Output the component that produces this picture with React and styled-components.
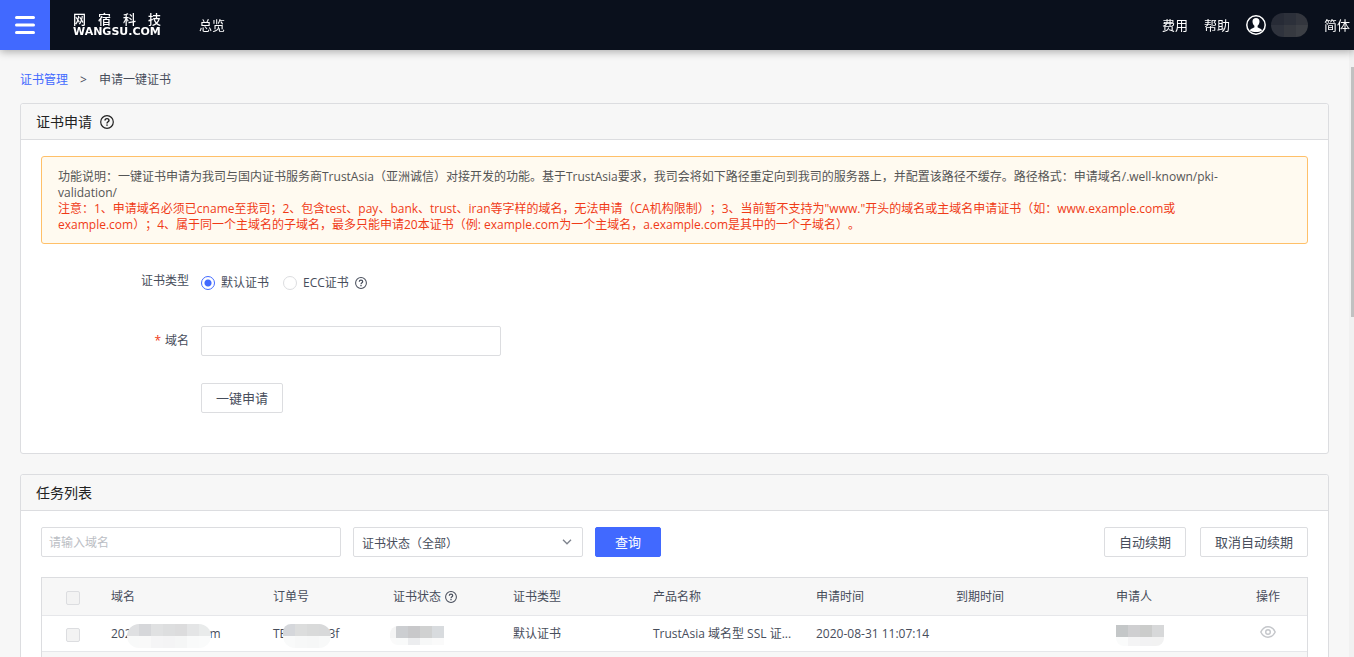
import React from "react";
import styled, { createGlobalStyle, css } from "styled-components";

const Global = createGlobalStyle`
  * { box-sizing: border-box; }
  body {
    margin: 0;
    background: #f7f7f7;
    color: #474d5b;
    font-family: "Open Sans", "Noto Sans CJK SC", sans-serif;
    font-size: 12px;
    line-height: 16px;
    text-spacing-trim: space-all;
  }
  button, input, select { font: inherit; color: inherit; }
  a { text-decoration: none; color: inherit; }
`;

const Shell = styled.div`
  display: flex;
  flex-direction: column;
  height: 100vh;
`;

const TopBar = styled.header`
  position: relative;
  z-index: 2;
  flex: none;
  display: flex;
  align-items: center;
  height: 50px;
  padding-right: 4px;
  background: #0a101c;
  color: #fff;
  font-size: 13px;
  box-shadow: 0 2px 8px rgba(0, 0, 0, 0.3);
`;

const MenuButton = styled.button`
  display: grid;
  place-items: center;
  width: 50px;
  height: 50px;
  padding: 0;
  border: 0;
  background: #4169ff;
  color: #fff;
`;

const Brand = styled.a`
  display: flex;
  flex-direction: column;
  width: 88px;
  margin: 0 38px 0 23px;
`;

const BrandName = styled.span`
  display: flex;
  justify-content: space-between;
  font-size: 13px;
  font-weight: 500;
  line-height: 14px;
`;

const BrandDomain = styled.span`
  font-family: "DejaVu Sans", sans-serif;
  font-weight: 700;
  font-size: 11px;
  line-height: 12px;
`;

const BarSide = styled.nav`
  display: flex;
  align-items: center;
  gap: 16px;
  margin-left: auto;
`;

const Account = styled.a`
  display: flex;
  align-items: center;
  gap: 5px;
`;

const AccountName = styled.span`
  display: flex;
  flex-wrap: wrap;
  width: 37px;
  height: 24px;
  border-radius: 12px;
  overflow: hidden;
`;

const NameBlock = styled.i`
  width: ${(p) => p.$w}px;
  height: 12px;
  background: ${(p) => p.$c};
`;

const Scroller = styled.main`
  flex: 1;
  min-height: 0;
  overflow-y: auto;
  scrollbar-width: none;
  padding: 21px 25px 20px 20px;
`;

const ScrollTrack = styled.div`
  position: fixed;
  z-index: 1;
  top: 50px;
  right: 0;
  bottom: 0;
  width: 5px;
  padding: 17px 0 0 2px;
  background: #f1f1f1;
`;

const ScrollThumb = styled.div`
  height: 250px;
  background: #c1c1c1;
`;

const Crumbs = styled.nav`
  display: flex;
  gap: 12px;
  height: 18px;
  line-height: 18px;
  margin-bottom: 14px;
`;

const CrumbLink = styled.a`
  color: #4169ff;
`;

const Panel = styled.section`
  border: 1px solid #dcdde0;
  border-radius: 3px;
  background: #fff;
  margin-bottom: 20px;
`;

const PanelHead = styled.h2`
  display: flex;
  align-items: center;
  gap: 8px;
  height: 36px;
  margin: 0;
  padding: 0 15px;
  border-bottom: 1px solid #dcdde0;
  background: #f7f7f7;
  border-radius: 3px 3px 0 0;
  color: #222;
  font-size: 14px;
  font-weight: 400;
`;

const PanelBody = styled.div`
  padding: 16px 20px ${(p) => p.$bottom || 20}px;
`;

const Notice = styled.div`
  padding: 12px 56px 10px 16px;
  border: 1px solid #ffc069;
  border-radius: 3px;
  background: #fffaf0;
  color: #555;
`;

const NoticeText = styled.p`
  margin: 0;
  color: ${(p) => (p.$warn ? "#f03a17" : "inherit")};
`;

const Form = styled.form`
  display: flex;
  flex-direction: column;
  gap: 27px;
  padding-top: 24px;
`;

const Field = styled.div`
  display: flex;
  align-items: center;
  min-height: 30px;
`;

const TypeField = styled(Field)`
  align-items: flex-start;
  min-height: 31px;
  padding-top: 5px;
`;

const FieldLabel = styled.label`
  width: 148px;
  margin-right: 12px;
  text-align: right;
`;

const Star = styled.span`
  color: #f03a17;
  margin-right: 4px;
`;

const RadioGroup = styled.div`
  display: flex;
  align-items: center;
  gap: 14px;
  padding-top: 2px;
`;

const RadioLabel = styled.label`
  display: flex;
  align-items: center;
  gap: 6px;
`;

const Radio = styled.input`
  appearance: none;
  width: 14px;
  height: 14px;
  margin: 0;
  border: 1px solid #dcdde0;
  border-radius: 50%;
  background: #fff;
  &:checked {
    border-color: #4169ff;
    background: radial-gradient(circle, #4169ff 3px, #fff 4px);
  }
`;

const box = css`
  height: 30px;
  border: 1px solid #dcdde0;
  border-radius: 2px;
  background: #fff;
`;

const TextBox = styled.input`
  ${box}
  width: 300px;
  padding: 0 7px;
  &::placeholder { color: #bbbec4; opacity: 1; }
`;

const Button = styled.button`
  ${box}
  padding: 0 14px;
  font-size: 13px;
  line-height: 26px;
  ${(p) => p.$primary && css`
    padding: 0 19px;
    border-color: #4169ff;
    background: #4169ff;
    color: #fff;
  `}
`;

const Indent = styled.div`
  padding-left: 160px;
`;

const Toolbar = styled.div`
  display: flex;
  gap: 12px;
  margin-bottom: 20px;
`;

const ToolbarEnd = styled.div`
  display: flex;
  gap: 14px;
  margin-left: auto;
`;

const SelectWrap = styled.div`
  display: grid;
  width: 230px;
  align-items: center;
  & > * { grid-area: 1 / 1; }
  & > svg { justify-self: end; margin-right: 11px; pointer-events: none; }
`;

const Select = styled.select`
  ${box}
  appearance: none;
  width: 100%;
  padding: 4px 8px 0;
`;

const Table = styled.table`
  width: 100%;
  table-layout: fixed;
  border-collapse: separate;
  border-spacing: 0;
  border: 1px solid #dcdde0;
`;

const Row = styled.tr`
  height: ${(p) => (p.$head ? 38 : 36)}px;
  background: ${(p) => (p.$shade ? "#f7f7f7" : "#fff")};
  & > * {
    padding: 0 10px 0 1px;
    border-bottom: 1px solid #e6e7ea;
    font-weight: 400;
    text-align: left;
    white-space: nowrap;
  }
  & > :first-child { padding: 0 0 0 24px; }
`;

const CheckBox = styled.input`
  appearance: none;
  display: block;
  width: 14px;
  height: 14px;
  margin: 2px 0 0;
  border: 1px solid #dcdde0;
  border-radius: 2px;
  background: #f3f3f3;
`;

const WithIcon = styled.span`
  display: flex;
  align-items: center;
  gap: 4px;
`;

const Masked = styled.span`
  display: flex;
  align-items: center;
`;

/* Pixelated patch that lies over a private value. */
const Patch = styled.svg`
  position: relative;
  display: block;
  flex: none;
  margin: 4px ${(p) => -(p.$over?.[1] || 0)}px 0 ${(p) => -(p.$over?.[0] || 0)}px;
  border-radius: ${(p) => p.$radius};
`;

const IconButton = styled.button`
  display: block;
  margin-left: 4px;
  padding: 0;
  border: 0;
  background: none;
  color: #c4c6ca;
`;

const Help = ({ size }) => (
  <svg width={size} height={size} viewBox="0 0 14 14" fill="none" stroke="currentColor" strokeWidth="1.2" aria-hidden="true">
    <circle cx="7" cy="7" r="6.3" />
    <path d="M5 5.6C5 4.3 5.9 3.6 7 3.6s2 .7 2 1.8C9 6.7 7 6.8 7 8.4" strokeWidth="1.4" />
    <path d="M7 9.4v1.4" strokeWidth="1.5" />
  </svg>
);

const UserIcon = () => (
  <svg width="20" height="20" viewBox="0 0 20 20" aria-hidden="true">
    <circle cx="10" cy="10" r="9.2" fill="none" stroke="#fff" strokeWidth="1.5" />
    <path d="M10 3C7.7 3 6.5 4.4 6.5 6.4c0 1.900.8 3.500 1.900 4.400v1.500c-.4.9-4 1.100-4.500 3.200C5.600 16.700 7.700 17 10 17s4.400-.3 6.100-1.500c-.5-2.100-4.100-2.300-4.500-3.200v-1.500c1.100-.9 1.900-2.500 1.900-4.400C13.500 4.400 12.300 3 10 3z" fill="#fff" />
  </svg>
);

const Eye = () => (
  <svg width="16" height="12" viewBox="0 0 16 12" fill="none" stroke="currentColor" strokeWidth="1.4" aria-hidden="true">
    <path d="M.8 6C2.5 2.5 5 .8 8 .8S13.5 2.5 15.2 6C13.5 9.5 11 11.2 8 11.2S2.5 9.500.8 6z" />
    <circle cx="8" cy="6" r="2.3" />
  </svg>
);

const Pixels = ({ top, bottom, width, height = 24, start = 0, radius, over }) => (
  <Patch width={width} height={height} viewBox={`0 0 ${width} ${height}`} $radius={radius} $over={over} aria-hidden="true">
    {top.map((c, i) => <rect key={i} x={start + i * 12} y="0" width="12" height="12" fill={c} />)}
    {bottom.map((c, i) => <rect key={i} x={start + i * 12} y="12" width="12" height="12" fill={c} />)}
  </Patch>
);

const columns = [68, 162, 120, 120, 140, 163, 140, 160, 140, null];

export default function App() {
  return (
    <Shell>
      <Global />
      <TopBar>
        <MenuButton aria-label="菜单">
          <svg width="20" height="18" viewBox="0 0 20 18" stroke="#fff" strokeWidth="3" strokeLinecap="round">
            <path d="M1.5 1.5h17M1.5 9h17M1.5 16.5h17" />
          </svg>
        </MenuButton>
        <Brand href="#home">
          <BrandName><span>网</span><span>宿</span><span>科</span><span>技</span></BrandName>
          <BrandDomain>WANGSU.COM</BrandDomain>
        </Brand>
        <a href="#overview">总览</a>
        <BarSide>
          <a href="#fees">费用</a>
          <a href="#help">帮助</a>
          <Account href="#account" aria-label="账号">
            <UserIcon />
            <AccountName>
              <NameBlock $w={13} $c="#272b36" /><NameBlock $w={12} $c="#2c303a" /><NameBlock $w={12} $c="#33363e" />
              <NameBlock $w={13} $c="#2f333d" /><NameBlock $w={12} $c="#363940" /><NameBlock $w={12} $c="#3c3f45" />
            </AccountName>
          </Account>
          <a href="#lang">简体</a>
        </BarSide>
      </TopBar>
      <Scroller>
        <Crumbs>
          <CrumbLink href="#certs">证书管理</CrumbLink>
          <span>&gt;</span>
          <span>申请一键证书</span>
        </Crumbs>
        <Panel>
          <PanelHead>证书申请 <Help size={14} /></PanelHead>
          <PanelBody $bottom={40}>
            <Notice>
              <NoticeText>功能说明：一键证书申请为我司与国内证书服务商TrustAsia（亚洲诚信）对接开发的功能。基于TrustAsia要求，我司会将如下路径重定向到我司的服务器上，并配置该路径不缓存。路径格式：申请域名/.well-known/pki-validation/</NoticeText>
              <NoticeText $warn>注意：1、申请域名必须已cname至我司；2、包含test、pay、bank、trust、iran等字样的域名，无法申请（CA机构限制）；3、当前暂不支持为"www."开头的域名或主域名申请证书（如：www.example.com或example.com）；4、属于同一个主域名的子域名，最多只能申请20本证书（例: example.com为一个主域名，a.example.com是其中的一个子域名）。</NoticeText>
            </Notice>
            <Form>
              <TypeField role="radiogroup" aria-labelledby="type-label">
                <FieldLabel as="span" id="type-label">证书类型</FieldLabel>
                <RadioGroup>
                  <RadioLabel><Radio type="radio" name="type" defaultChecked />默认证书</RadioLabel>
                  <RadioLabel><Radio type="radio" name="type" />ECC证书 <Help size={12} /></RadioLabel>
                </RadioGroup>
              </TypeField>
              <Field>
                <FieldLabel htmlFor="domain"><Star>*</Star>域名</FieldLabel>
                <TextBox id="domain" />
              </Field>
              <Indent><Button type="button">一键申请</Button></Indent>
            </Form>
          </PanelBody>
        </Panel>
        <Panel>
          <PanelHead>任务列表</PanelHead>
          <PanelBody>
            <Toolbar>
              <TextBox placeholder="请输入域名" aria-label="域名" />
              <SelectWrap>
                <Select aria-label="证书状态"><option>证书状态（全部）</option></Select>
                <svg width="10" height="6" viewBox="0 0 10 6" fill="none" stroke="#7d828c" strokeWidth="1.3"><path d="M1 .8l4 4 4-4" /></svg>
              </SelectWrap>
              <Button $primary>查询</Button>
              <ToolbarEnd>
                <Button>自动续期</Button>
                <Button>取消自动续期</Button>
              </ToolbarEnd>
            </Toolbar>
            <Table>
              <colgroup>{columns.map((w, i) => <col key={i} width={w || undefined} />)}</colgroup>
              <thead>
                <Row $head $shade>
                  <th><CheckBox type="checkbox" aria-label="全选" /></th>
                  <th>域名</th>
                  <th>订单号</th>
                  <th><WithIcon>证书状态 <Help size={12} /></WithIcon></th>
                  <th>证书类型</th>
                  <th>产品名称</th>
                  <th>申请时间</th>
                  <th>到期时间</th>
                  <th>申请人</th>
                  <th>操作</th>
                </Row>
              </thead>
              <tbody>
                <Row>
                  <td><CheckBox type="checkbox" aria-label="选择" /></td>
                  <td>
                    <Masked>
                      <span>202</span>
                      <Pixels width={84} radius="12px" over={[5, 1]} top={["#dfe0e2", "#d6d7da", "#e0e1e2", "#dddedf", "#dcdcdd", "#e4e5e6", "#e9ebeb"]} bottom={["#f8f9f9", "#f9f9f9", "#f5f5f6", "#f4f4f5", "#f5f6f6", "#f9fafa", "#fafbfb"]} />
                      <span>m</span>
                    </Masked>
                  </td>
                  <td>
                    <Masked>
                      <span>TB</span>
                      <Pixels width={48} radius="8px 12px 12px 12px" over={[4, 3]} top={["#d5d7db", "#dcdddd", "#d9dada", "#d8d9da"]} bottom={["#f9fafa", "#f7f8f8", "#f6f7f7", "#f8f9f9"]} />
                      <span>3f</span>
                    </Masked>
                  </td>
                  <td><Pixels width={54} height={19} start={-6} radius="8px 0 0 8px" over={[3, 0]} top={["#f5f5f5", "#ccced1", "#c8c8ca", "#d0d1d1", "#d8dbde"]} bottom={["#fafafa", "#f9fafa", "#ecedef", "#f7f8f8", "#fafafa"]} /></td>
                  <td>默认证书</td>
                  <td>TrustAsia 域名型 SSL 证...</td>
                  <td>2020-08-31 11:07:14</td>
                  <td />
                  <td><Pixels width={48} height={21} radius="0 0 8px 8px" top={["#c4c7c8", "#cfcfd1", "#cbcccb", "#d7d8d9"]} bottom={["#fafbfb", "#f4f4f5", "#f2f2f3", "#f2f2f2"]} /></td>
                  <td><IconButton aria-label="查看"><Eye /></IconButton></td>
                </Row>
                <Row $shade>
                  <td><CheckBox type="checkbox" aria-label="选择" /></td>
                  <td /><td /><td /><td /><td /><td /><td /><td /><td />
                </Row>
              </tbody>
            </Table>
          </PanelBody>
        </Panel>
      </Scroller>
      <ScrollTrack aria-hidden="true"><ScrollThumb /></ScrollTrack>
    </Shell>
  );
}
